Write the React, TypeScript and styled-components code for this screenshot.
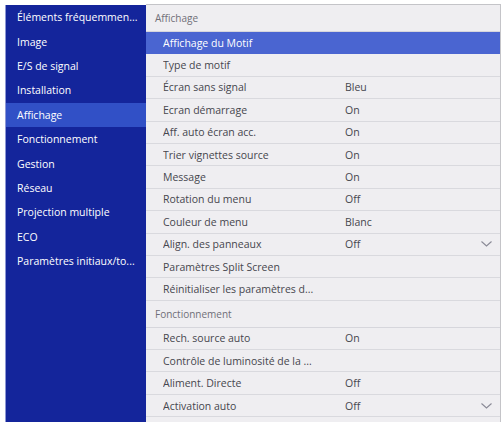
import React from "react";
import styled, { createGlobalStyle } from "styled-components";

const Global = createGlobalStyle`
  html, body { margin: 0; padding: 0; background: #ffffff; }
  body { font-family: "Open Sans", "Noto Sans", sans-serif; }
`;

const Screen = styled.div`
  display: flex;
  height: 418px;
  padding: 4px 3px 0 5px;
  overflow: hidden;
`;

const Sidebar = styled.nav`
  width: 140px;
  flex: 0 0 140px;
  margin-top: 1px;
  background: #14259b;
  border-left: 1px solid #8d97d4;
  display: flex;
  flex-direction: column;
`;

const SideItem = styled.div<{ $active?: boolean }>`
  height: 24.4px;
  display: flex;
  align-items: center;
  padding-left: 11px;
  font-size: 10.5px;
  color: #ffffff;
  background: ${(p) => (p.$active ? "#3150c6" : "transparent")};
  white-space: nowrap;
  overflow: hidden;
`;

const Panel = styled.section`
  flex: 1;
  background: #efeef1;
  border-top: 1px solid #c4c4c8;
  border-right: 1px solid #c4c4c8;
  display: flex;
  flex-direction: column;
  overflow: hidden;
`;

const SectionHeader = styled.div`
  height: 27px;
  flex: 0 0 auto;
  display: flex;
  align-items: center;
  padding-left: 9px;
  font-size: 10px;
  color: #6f6f78;
  border-bottom: 1px solid #d6d6dc;
  box-sizing: border-box;
`;

const Row = styled.div<{ $selected?: boolean }>`
  height: 22.4px;
  flex: 0 0 auto;
  box-sizing: border-box;
  display: grid;
  grid-template-columns: 182px 1fr 28px;
  align-items: center;
  padding-left: 17px;
  font-size: 10.5px;
  color: ${(p) => (p.$selected ? "#ffffff" : "#46464e")};
  background: ${(p) => (p.$selected ? "#4a65d1" : "transparent")};
  border-bottom: 1px solid ${(p) => (p.$selected ? "#4a65d1" : "#d9d9de")};
  white-space: nowrap;
`;

const Label = styled.span`
  overflow: hidden;
`;

const Value = styled.span``;

const Chevron = styled.svg`
  width: 11px;
  height: 6px;
  justify-self: center;
`;

const sideItems = [
  "Éléments fréquemmen...",
  "Image",
  "E/S de signal",
  "Installation",
  "Affichage",
  "Fonctionnement",
  "Gestion",
  "Réseau",
  "Projection multiple",
  "ECO",
  "Paramètres initiaux/to...",
];

type Item = { label: string; value?: string; chevron?: boolean; selected?: boolean };

const affichage: Item[] = [
  { label: "Affichage du Motif", selected: true },
  { label: "Type de motif" },
  { label: "Écran sans signal", value: "Bleu" },
  { label: "Ecran démarrage", value: "On" },
  { label: "Aff. auto écran acc.", value: "On" },
  { label: "Trier vignettes source", value: "On" },
  { label: "Message", value: "On" },
  { label: "Rotation du menu", value: "Off" },
  { label: "Couleur de menu", value: "Blanc" },
  { label: "Align. des panneaux", value: "Off", chevron: true },
  { label: "Paramètres Split Screen" },
  { label: "Réinitialiser les paramètres d..." },
];

const fonctionnement: Item[] = [
  { label: "Rech. source auto", value: "On" },
  { label: "Contrôle de luminosité de la ..." },
  { label: "Aliment. Directe", value: "Off" },
  { label: "Activation auto", value: "Off", chevron: true },
  { label: "Mode veille", value: "On", chevron: true },
];

const ChevronIcon = () => (
  <Chevron viewBox="0 0 11 6">
    <polyline points="0.5,0.5 5.5,5 10.5,0.5" fill="none" stroke="#8a8a96" strokeWidth="1.1" />
  </Chevron>
);

const renderRows = (items: Item[]) =>
  items.map((it) => (
    <Row key={it.label} $selected={it.selected}>
      <Label>{it.label}</Label>
      <Value>{it.value ?? ""}</Value>
      {it.chevron ? <ChevronIcon /> : <span />}
    </Row>
  ));

export default function App() {
  return (
    <>
      <Global />
      <Screen>
        <Sidebar>
          {sideItems.map((s) => (
            <SideItem key={s} $active={s === "Affichage"}>
              {s}
            </SideItem>
          ))}
        </Sidebar>
        <Panel>
          <SectionHeader>Affichage</SectionHeader>
          {renderRows(affichage)}
          <SectionHeader>Fonctionnement</SectionHeader>
          {renderRows(fonctionnement)}
        </Panel>
      </Screen>
    </>
  );
}
